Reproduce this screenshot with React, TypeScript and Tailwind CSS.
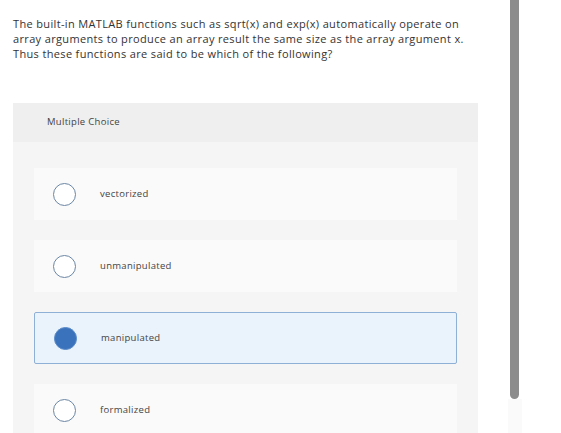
import React from "react";

const options = [
  { label: "vectorized", selected: false },
  { label: "unmanipulated", selected: false },
  { label: "manipulated", selected: true },
  { label: "formalized", selected: false },
];

export default function App() {
  return (
    <div
      className="relative w-[561px] h-[433px] overflow-hidden bg-white text-[#333]"
      style={{ fontFamily: "'Open Sans', Lato, sans-serif" }}
    >
      <div className="pl-[13px] pt-[16px] w-[520px] text-[11px] tracking-[0.35px] leading-[15px] text-[#333] whitespace-nowrap">
        The built-in MATLAB functions such as sqrt(x) and exp(x) automatically operate on
        <br />
        array arguments to produce an array result the same size as the array argument x.
        <br />
        Thus these functions are said to be which of the following?
      </div>

      <div className="ml-[13px] mt-[42px] w-[465px] bg-[#f5f5f5]">
        <div className="h-[39px] bg-[#efefef] pl-[34px] flex items-center text-[9.5px] tracking-[0.3px] text-[#444]">
          Multiple Choice
        </div>
        <div className="px-[21px] pt-[26px] flex flex-col gap-[20px]">
          {options.map((o) => (
            <div
              key={o.label}
              className={
                o.selected
                  ? "h-[52px] flex items-center pl-[19px] rounded-[2px] border border-[#8fb0d6] bg-[#eaf2fc]"
                  : "h-[52px] flex items-center pl-[19px] bg-[#fafafa]"
              }
            >
              {o.selected ? (
                <div className="w-[23px] h-[23px] rounded-full bg-[#3a72bb] border border-[#5a8bc8] shrink-0" />
              ) : (
                <div className="w-[23px] h-[23px] rounded-full border-[1.5px] border-[#6b86a4] bg-white shrink-0" />
              )}
              <span className="ml-[24px] text-[9.5px] tracking-[0.3px] text-[#444]">{o.label}</span>
            </div>
          ))}
        </div>
      </div>

      <div className="absolute left-[508px] top-[399px] w-[14px] h-[40px] bg-[#fafafa]" />
      <div className="absolute left-[510px] top-0 w-[9px] h-[399px] bg-[#8c8c8c] rounded-b-full" />
    </div>
  );
}
